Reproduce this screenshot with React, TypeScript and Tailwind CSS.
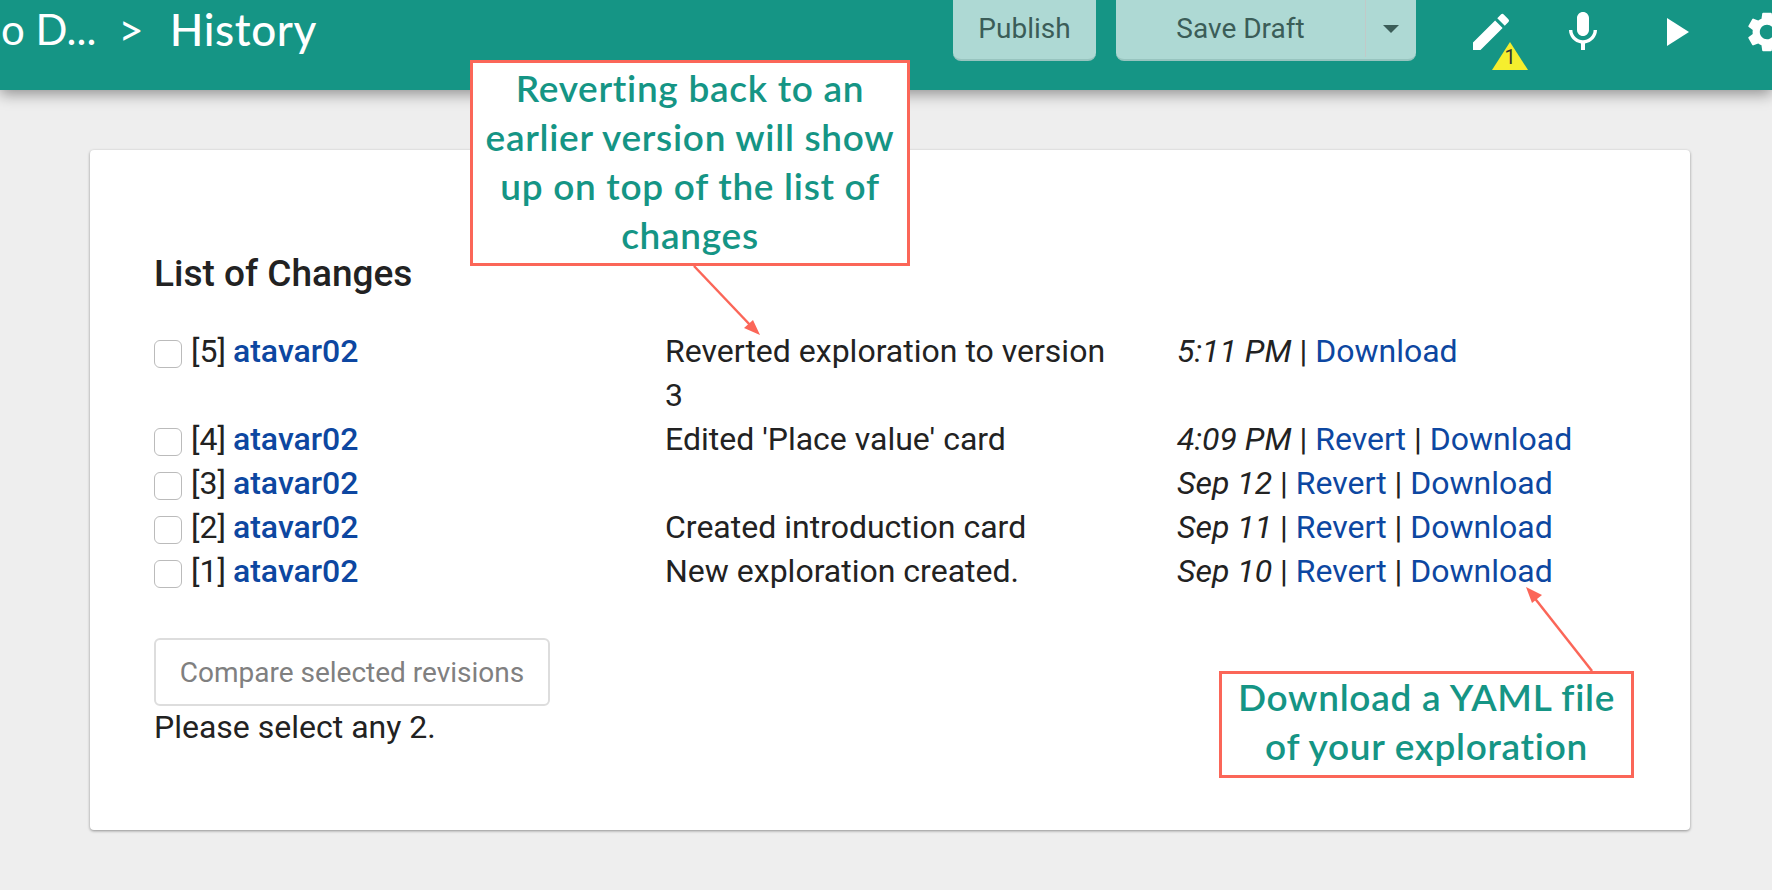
import { MdEdit, MdMic, MdPlayArrow, MdSettings } from "react-icons/md";

const revisions = [
  { id: 5, note: "Reverted exploration to version 3", date: "5:11 PM", revert: false },
  { id: 4, note: "Edited 'Place value' card", date: "4:09 PM", revert: true },
  { id: 3, note: "", date: "Sep 12", revert: true },
  { id: 2, note: "Created introduction card", date: "Sep 11", revert: true },
  { id: 1, note: "New exploration created.", date: "Sep 10", revert: true },
];

const Header = () => (
  <header className="relative z-10 flex h-[90px] shrink-0 items-start overflow-hidden bg-[#159585] shadow-[0_4px_14px_rgba(0,0,0,0.4)]">
    <div className="flex h-[57px] w-[953px] shrink-0 items-center whitespace-nowrap pl-[1px] font-['Lato',sans-serif] text-[44px] text-white">
      <span className="text-[42px]">o D...</span>
      <span className="ml-[22px]">&gt;</span>
      <span className="ml-[26px] font-medium tracking-[0.6px]">History</span>
    </div>
    <button className="flex h-[61px] w-[143px] shrink-0 items-center justify-center rounded-b-lg border-b-2 border-[#98c4bf] bg-[#aed9d4] pb-[2px] text-[28px] text-[#3b5d58]">
      Publish
    </button>
    <div className="ml-[20px] flex h-[61px] w-[300px] shrink-0 rounded-b-lg border-b-2 border-[#98c4bf] bg-[#aed9d4] pb-[2px] text-[28px] text-[#3b5d58]">
      <span className="flex w-[250px] items-center justify-center border-r border-[#c2c9c8]">Save Draft</span>
      <span className="flex flex-1 items-center justify-center">
        <span className="h-0 w-0 border-x-[8px] border-t-[8px] border-x-transparent border-t-[#3b5d58]"></span>
      </span>
    </div>
    <div className="ml-[51px] flex shrink-0 items-center gap-[44px] pt-[8px] text-white">
      <div className="relative h-[48px] w-[48px]">
        <MdEdit size={48} />
        <svg className="absolute left-[25px] top-[34px]" width="36" height="28" viewBox="0 0 36 28">
          <polygon points="18,0 36,28 0,28" fill="#f5ee2e" />
        </svg>
        <span className="absolute left-[25px] top-[37px] w-[36px] text-center font-['Roboto',sans-serif] text-[20px] leading-[24px] text-[#333]">
          1
        </span>
      </div>
      <MdMic size={48} className="shrink-0" />
      <MdPlayArrow size={48} className="shrink-0" />
      <MdSettings size={48} className="shrink-0" />
    </div>
  </header>
);

const RevisionRow = ({ id, note, date, revert }: (typeof revisions)[number]) => (
  <div className="grid grid-cols-[511px_512px_1fr]">
    <div className="flex items-start">
      <span className="mt-[11px] h-[28px] w-[28px] shrink-0 rounded-[6px] border border-[#bbb] bg-white"></span>
      <span className="ml-[9px]">[{id}]</span>
      <a className="ml-[7px] font-medium text-[#0d47a1]">atavar02</a>
    </div>
    <div className="pr-[60px]">{note}</div>
    <div className="whitespace-nowrap">
      <em>{date}</em> | {revert && <><a className="text-[#0d47a1]">Revert</a> | </>}
      <a className="text-[#0d47a1]">Download</a>
    </div>
  </div>
);

const Callout = ({ className, textClass, lines }: { className: string; textClass?: string; lines: string[] }) => (
  <div className={`absolute z-20 border-[3px] border-[#fb6658] bg-white text-center font-['Lato',sans-serif] text-[37px] font-semibold leading-[49px] tracking-[0.7px] text-[#159585] ${className}`}>
    <div className={textClass}>
      {lines.map((line) => (
        <div key={line}>{line}</div>
      ))}
    </div>
  </div>
);

const App = () => {
  return (
    <div className="relative flex h-[890px] w-[1772px] flex-col overflow-hidden bg-[#eeeeee] font-['Roboto',sans-serif] text-[32px] leading-[44px] text-[#222]">
      <Header />

      <main className="px-[90px] pt-[60px]">
        <div className="h-[680px] w-[1600px] rounded-[4px] bg-white pl-[64px] pt-[97px] shadow-[0_1px_3px_rgba(0,0,0,0.4)]">
          <h2 className="text-[37px] font-medium leading-[54px] text-[#222]">List of Changes</h2>
          <div className="mt-[28px]">
            {revisions.map((rev) => (
              <RevisionRow key={rev.id} {...rev} />
            ))}
          </div>
          <button className="mt-[45px] block h-[68px] w-[396px] rounded-[6px] border-2 border-[#ddd] bg-white pt-[1px] text-[28px] text-[#808080]">
            Compare selected revisions
          </button>
          <p className="-mt-[1px]">Please select any 2.</p>
        </div>
      </main>

      <Callout
        className="left-[470px] top-[60px] h-[206px] w-[440px]"
        lines={["Reverting back to an", "earlier version will show", "up on top of the list of", "changes"]}
      />
      <Callout
        className="left-[1219px] top-[671px] h-[107px] w-[415px]"
        textClass="-mt-[2px]"
        lines={["Download a YAML file", "of your exploration"]}
      />

      {/* arrows from the callouts */}
      <svg className="absolute left-0 top-0 z-10" width="1772" height="890" viewBox="0 0 1772 890" fill="none">
        <line x1="694" y1="266" x2="752" y2="327" stroke="#fb6658" strokeWidth="2.5" />
        <polygon points="760,335 744,328 753,320" fill="#fb6658" />
        <line x1="1592" y1="671" x2="1533" y2="596" stroke="#fb6658" strokeWidth="2.5" />
        <polygon points="1526,587 1542,595 1532,603" fill="#fb6658" />
      </svg>
    </div>
  );
};

export default App;
